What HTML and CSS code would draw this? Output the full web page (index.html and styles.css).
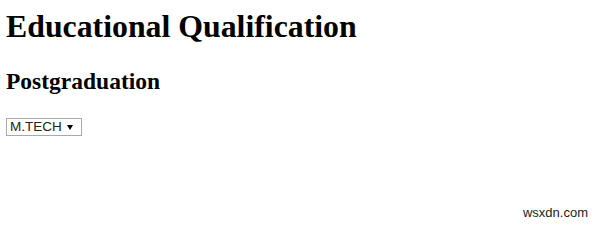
FILE: index.html
```html
<!DOCTYPE html>
<html lang="en">
<head>
    <meta charset="UTF-8">
    <title>Educational Qualification</title>
    <link rel="stylesheet" href="styles.css">
</head>
<body>
    <div class="page">
        <h1 class="title">Educational Qualification</h1>
        <h2 class="subtitle">Postgraduation</h2>
        <span class="select-wrap">
            <select class="degree">
                <option>M.TECH</option>
                <option>M.SC</option>
                <option>MBA</option>
            </select>
        </span>
    </div>
    <div class="watermark">wsxdn.com</div>
</body>
</html>
```

FILE: styles.css
```css
body {
    margin: 0;
    background: #fff;
    color: #000;
    font-family: 'Liberation Serif', 'Times New Roman', serif;
    height: 228px;
    position: relative;
    overflow: hidden;
}
.page {
    padding: 8px 6px;
}
.title {
    font-size: 31.8px;
    font-weight: bold;
    margin: 0 0 22px;
    line-height: 37px;
}
.subtitle {
    font-size: 23.5px;
    font-weight: bold;
    margin: 0 0 22px;
    line-height: 28px;
}
.select-wrap {
    position: relative;
    display: inline-block;
    line-height: 0;
}
.degree {
    -webkit-appearance: none;
    appearance: none;
    font-family: 'Liberation Sans', Arial, sans-serif;
    font-size: 13.5px;
    line-height: 16px;
    height: 18px;
    width: 76px;
    padding: 0 0 0 3px;
    margin: 0;
    border: 1px solid #a9a9a9;
    border-radius: 0;
    background: #fff;
    color: #222;
}
/* small solid arrow like the old native select */
.select-wrap::after {
    content: "";
    position: absolute;
    left: 61px;
    top: 7px;
    border-left: 3px solid transparent;
    border-right: 3px solid transparent;
    border-top: 5px solid #000;
    pointer-events: none;
}
/* site mark, bottom right */
.watermark {
    position: absolute;
    right: 12px;
    bottom: 8px;
    font-family: 'Liberation Sans', Arial, sans-serif;
    font-size: 13px;
    color: #222;
}
```
